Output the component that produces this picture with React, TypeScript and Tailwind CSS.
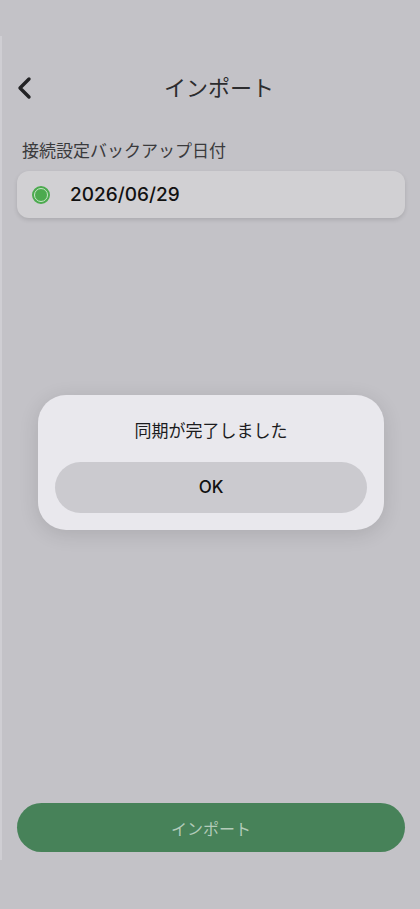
import React from "react";

export default function App() {
  return (
    <div
      className="relative w-[420px] h-[909px] bg-[#c3c2c7] overflow-hidden flex flex-col"
      style={{ fontFamily: '"Noto Sans CJK JP", "Noto Sans", sans-serif' }}
    >
      <div className="absolute left-0 top-[36px] w-[2px] h-[824px] bg-[#cfced3]" />
      <div className="h-[64px]" />
      <div className="relative h-[44px] flex items-center justify-center pl-[18px]">
        <div className="absolute left-[16px] top-[12px]">
          <svg width="18" height="24" viewBox="0 0 18 24" fill="none">
            <path d="M13 3 L4 12 L13 21" stroke="#232325" strokeWidth="3.4" strokeLinecap="round" strokeLinejoin="round" />
          </svg>
        </div>
        <span className="text-[22px] text-[#2c2c2e] leading-none">インポート</span>
      </div>
      <div className="px-[22px] mt-[33px] text-[17px] text-[#3a3a3c] leading-none">接続設定バックアップ日付</div>
      <div className="ml-[17px] mr-[15px] mt-[13px] h-[47px] rounded-[12px] bg-[#d1d0d3] shadow-[0_2px_4px_rgba(0,0,0,0.12)] flex items-center px-[15px]">
        <div className="w-[18px] h-[18px] rounded-full bg-[#4caa4f] border-[2px] border-[#4caa4f] flex items-center justify-center">
          <div className="w-[14px] h-[14px] rounded-full border-[1.5px] border-[#c9e6c9] bg-[#4caa4f]" />
        </div>
        <span className="ml-[20px] text-[19px] font-medium text-[#111] leading-none" style={{ fontFamily: 'Inter, "Noto Sans CJK JP", sans-serif' }}>2026/06/29</span>
      </div>

      <div className="flex-1 flex flex-col items-center">
        <div className="mt-[177px] ml-[2px] w-[346px] h-[135px] rounded-[28px] bg-[#e9e8ed] shadow-[0_4px_20px_rgba(0,0,0,0.12)] flex flex-col items-center px-[17px]">
          <div className="mt-[26px] text-[17px] text-[#1c1c1e] leading-none">同期が完了しました</div>
          <div className="mt-[24px] w-full h-[51px] rounded-full bg-[#cbcacf] flex items-center justify-center text-[17px] font-medium text-[#111] leading-none" style={{ fontFamily: 'Inter, "Noto Sans CJK JP", sans-serif' }}>OK</div>
        </div>
      </div>

      <div className="ml-[17px] mr-[15px] mb-[57px] h-[49px] rounded-full bg-[#478259] flex items-center justify-center text-[16px] text-[#b3cbb9] leading-none">インポート</div>
    </div>
  );
}
